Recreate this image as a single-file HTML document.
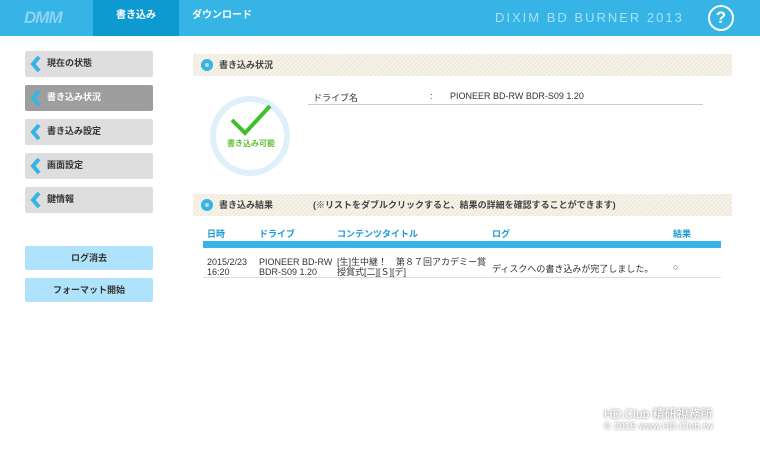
<!DOCTYPE html>
<html><head><meta charset="utf-8"><style>
*{margin:0;padding:0;box-sizing:border-box}
body{width:760px;height:454px;background:#fff;font-family:"Liberation Sans","Noto Sans CJK JP",sans-serif;position:relative;overflow:hidden;color:#333}
.hdr{position:absolute;left:0;top:0;width:760px;height:36px;background:#35b4e5}
.tab{position:absolute;top:0;height:36px;line-height:32px;color:#fff;font-size:10px;font-weight:bold;text-align:center}
.nav{position:absolute;left:25px;width:128px;height:26px;background:#dedede;border-radius:2px;font-size:9px;font-weight:bold;line-height:25px;padding-left:22px;color:#333}
.nav.act{background:#9e9e9e;color:#fff}
.nav svg{position:absolute;left:5px;top:5px}
.btn{position:absolute;left:25px;width:128px;height:24px;background:#aee3fb;border-radius:2px;font-size:9px;font-weight:bold;line-height:24px;text-align:center;color:#333}
.sec{position:absolute;left:193px;width:539px;height:22px;background:repeating-linear-gradient(135deg,#f6f3ea 0 2px,#ebe6d6 2px 3px);font-size:9px;font-weight:bold;line-height:22px;padding-left:26px;color:#444}
.sec i{position:absolute;left:8px;top:5px;width:12px;height:12px;border-radius:50%;background:#35b4e5}
.sec i:after{content:"";position:absolute;left:4px;top:4px;width:4px;height:4px;border-radius:50%;background:#fff;opacity:.6}
.t{position:absolute;font-size:9px}
.th{position:absolute;top:227px;font-size:9px;font-weight:bold;color:#1a9ad6}
</style></head><body>
<div class="hdr">
<div style="position:absolute;left:24px;top:8px;font-size:17px;font-weight:bold;font-style:italic;color:#8fd3f2;letter-spacing:-1px">DMM</div>
<div class="tab" style="left:93px;width:86px;background:#0d9ad0">書き込み</div>
<div class="tab" style="left:179px;width:86px">ダウンロード</div>
<div style="position:absolute;left:495px;top:10px;font-size:13px;color:#a8e0f7;letter-spacing:2px">DIXIM BD BURNER 2013</div>
<div style="position:absolute;left:708px;top:5px;width:26px;height:26px;border:2.5px solid #fff;border-radius:50%;color:#fff;font-weight:bold;font-size:17px;text-align:center;line-height:21px">?</div>
</div>
<div class="nav" style="top:51px"><svg width="12" height="16"><path d="M9 1L3 8L9 15" stroke="#35b4e5" stroke-width="4" fill="none"/></svg>現在の状態</div>
<div class="nav act" style="top:85px"><svg width="12" height="16"><path d="M9 1L3 8L9 15" stroke="#35b4e5" stroke-width="4" fill="none"/></svg>書き込み状況</div>
<div class="nav" style="top:119px"><svg width="12" height="16"><path d="M9 1L3 8L9 15" stroke="#35b4e5" stroke-width="4" fill="none"/></svg>書き込み設定</div>
<div class="nav" style="top:153px"><svg width="12" height="16"><path d="M9 1L3 8L9 15" stroke="#35b4e5" stroke-width="4" fill="none"/></svg>画面設定</div>
<div class="nav" style="top:187px"><svg width="12" height="16"><path d="M9 1L3 8L9 15" stroke="#35b4e5" stroke-width="4" fill="none"/></svg>鍵情報</div>
<div class="btn" style="top:246px">ログ消去</div>
<div class="btn" style="top:278px">フォーマット開始</div>

<div class="sec" style="top:54px"><i></i>書き込み状況</div>
<svg style="position:absolute;left:208px;top:94px" width="84" height="84"><circle cx="42" cy="42" r="37" stroke="#dff0f8" stroke-width="6" fill="none"/><path d="M24 26L37 39L62 12" stroke="#3fbf2a" stroke-width="4" fill="none"/></svg>
<div class="t" style="left:227px;top:138px;font-size:8px;font-weight:bold;color:#5cc02c">書き込み可能</div>
<div class="t" style="left:313px;top:91px">ドライブ名</div>
<div class="t" style="left:430px;top:91px">:</div>
<div class="t" style="left:450px;top:91px">PIONEER BD-RW BDR-S09 1.20</div>
<div style="position:absolute;left:308px;top:104px;width:395px;height:1px;background:#ccc"></div>

<div class="sec" style="top:194px"><i></i>書き込み結果<span style="position:absolute;left:120px">(※リストをダブルクリックすると、結果の詳細を確認することができます)</span></div>
<div class="th" style="left:207px">日時</div>
<div class="th" style="left:259px">ドライブ</div>
<div class="th" style="left:337px">コンテンツタイトル</div>
<div class="th" style="left:492px">ログ</div>
<div class="th" style="left:673px">結果</div>
<div style="position:absolute;left:203px;top:241px;width:518px;height:7px;background:#35b4e5"></div>
<div class="t" style="left:207px;top:257px;line-height:10px">2015/2/23<br>16:20</div>
<div class="t" style="left:259px;top:257px;line-height:10px">PIONEER BD-RW<br>BDR-S09 1.20</div>
<div class="t" style="left:337px;top:257px;line-height:10px">[生]生中継！　第８７回アカデミー賞<br>授賞式[二][Ｓ][デ]</div>
<div class="t" style="left:492px;top:262px">ディスクへの書き込みが完了しました。</div>
<div class="t" style="left:673px;top:262px">○</div>
<div style="position:absolute;left:203px;top:277px;width:518px;height:1px;background:#ddd"></div>

<div style="position:absolute;left:604px;top:405px;font-size:12px;color:#fff;text-shadow:0 0 2px #999,0 0 3px #aaa">HD.Club 精研視務所</div>
<div style="position:absolute;left:604px;top:421px;font-size:9px;color:#fff;text-shadow:0 0 2px #999,0 0 3px #aaa;letter-spacing:.5px">© 2015  www.HD.Club.tw</div>
</body></html>
